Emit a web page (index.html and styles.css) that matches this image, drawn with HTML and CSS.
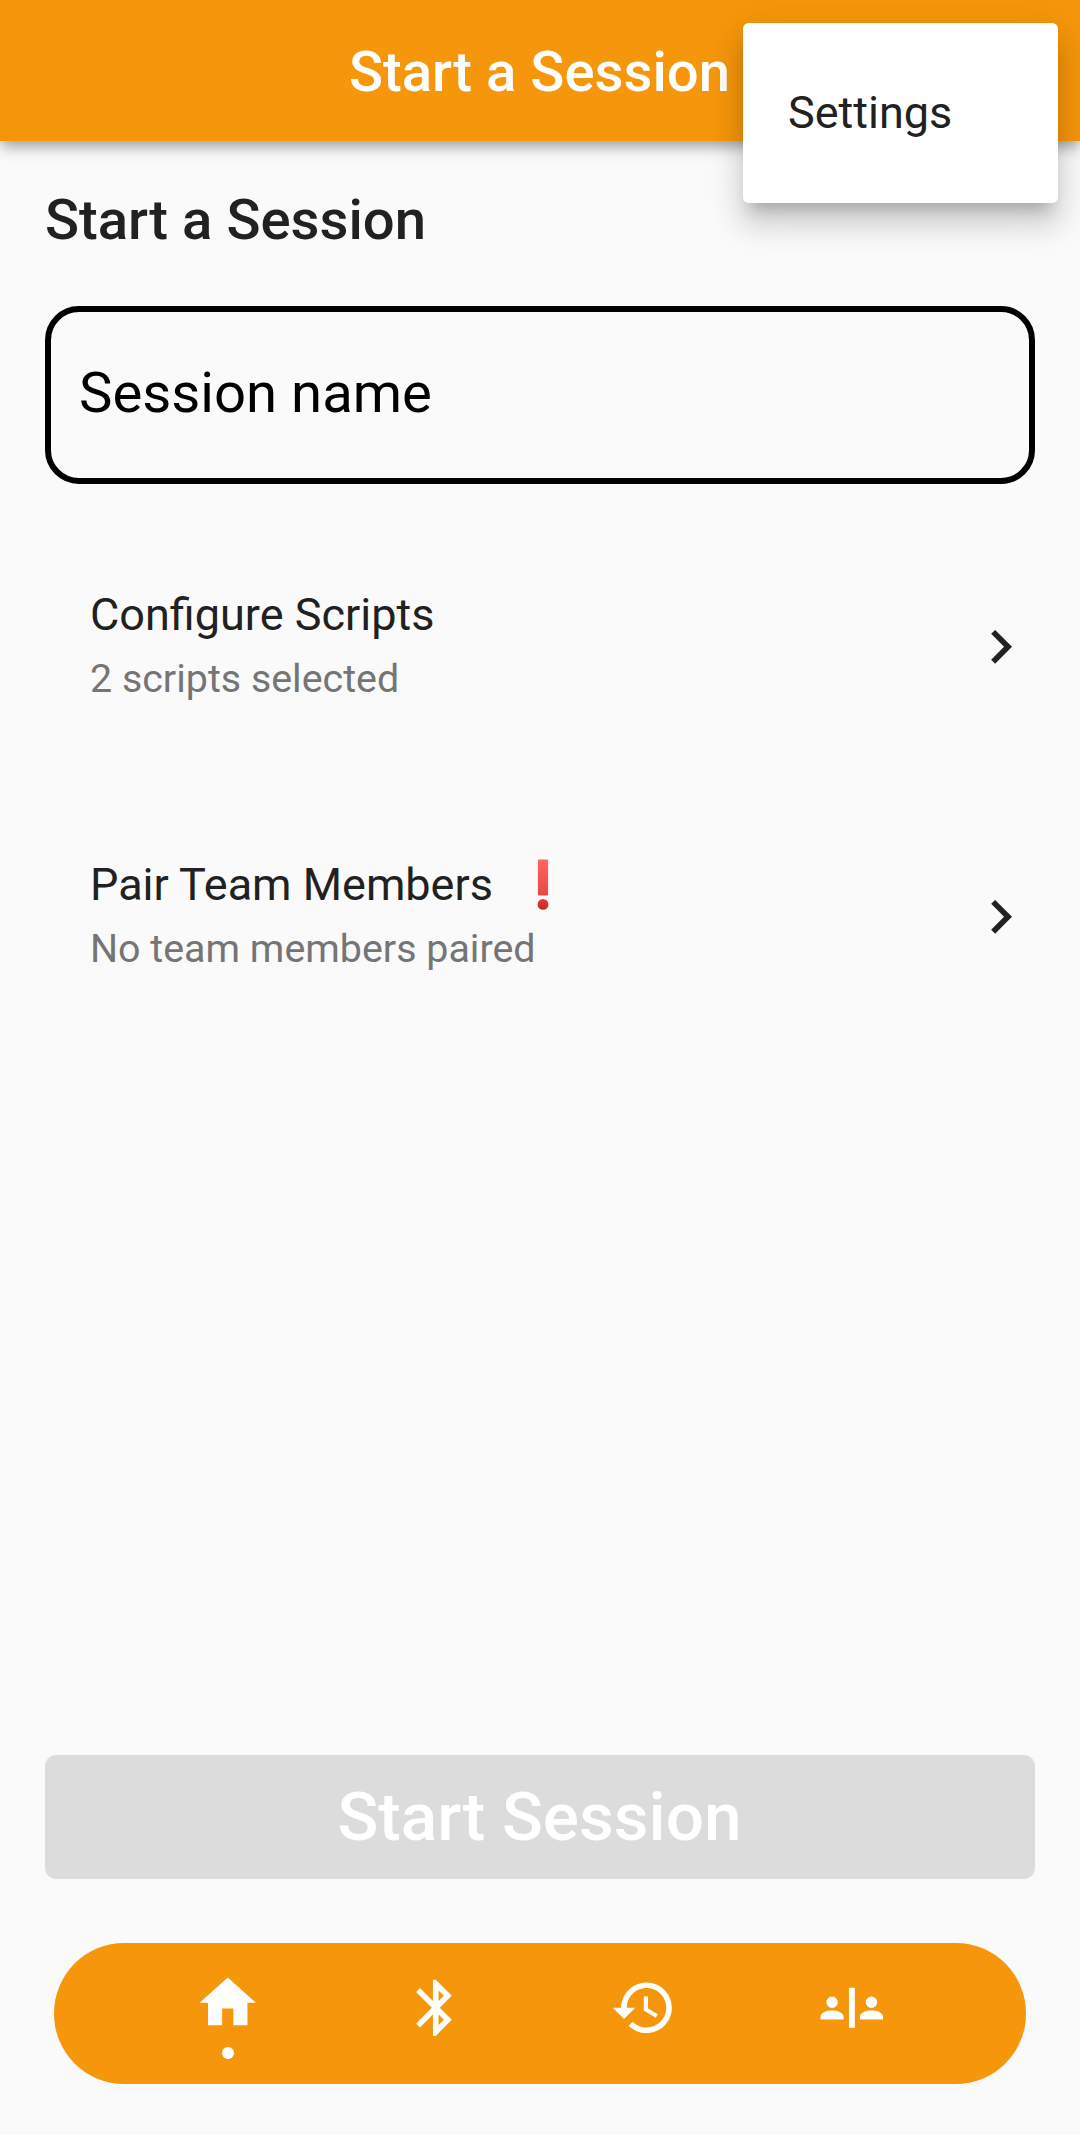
FILE: index.html
```html
<!DOCTYPE html>
<html lang="en">
<head>
<meta charset="utf-8">
<title>Start a Session</title>
<link rel="stylesheet" href="styles.css">
</head>
<body>
<div class="app">
  <header class="app-bar">
    <h1 class="app-title">Start a Session</h1>
  </header>
  <div class="popup-menu">
    <div class="menu-item">Settings</div>
  </div>

  <main class="content">
    <h2 class="heading">Start a Session</h2>
    <div class="field">Session name</div>
    <div class="tile">
      <div class="tile-text">
        <div class="tile-title">Configure Scripts</div>
        <div class="tile-sub">2 scripts selected</div>
      </div>
      <svg class="icon" viewBox="0 0 24 24"><path d="M10 6L8.59 7.41 13.17 12l-4.58 4.59L10 18l6-6z"/></svg>
    </div>
    <div class="tile">
      <div class="tile-text">
        <div class="tile-title">Pair Team Members
          <svg class="alert" viewBox="0 0 12 52">
            <defs>
              <linearGradient id="bar" x1="0" y1="0" x2="0" y2="1"><stop offset="0" stop-color="#ff6464"/><stop offset="1" stop-color="#e94848"/></linearGradient>
              <linearGradient id="dot" x1="0" y1="0" x2="0" y2="1"><stop offset="0" stop-color="#e33b3b"/><stop offset="1" stop-color="#c62828"/></linearGradient>
            </defs>
            <rect x=".9" y=".4" width="10.2" height="36" rx="1.2" fill="url(#bar)"/>
            <circle cx="6" cy="45.4" r="5.4" fill="url(#dot)"/>
          </svg>
        </div>
        <div class="tile-sub">No team members paired</div>
      </div>
      <svg class="icon" viewBox="0 0 24 24"><path d="M10 6L8.59 7.41 13.17 12l-4.58 4.59L10 18l6-6z"/></svg>
    </div>
    <button class="start" disabled>Start Session</button>
  </main>

  <nav class="nav">
    <div class="nav-item active">
      <svg class="icon" viewBox="0 0 24 24"><path d="M10 20v-6h4v6h5v-8h3L12 3 2 12h3v8z"/></svg>
      <span class="nav-dot"></span>
    </div>
    <div class="nav-item">
      <svg class="icon" viewBox="0 0 24 24"><path d="M17.71 7.71L12 2h-1v7.59L6.41 5 5 6.41 10.59 12 5 17.59 6.41 19 11 14.41V22h1l5.71-5.71-4.3-4.29 4.3-4.29zM13 5.83l1.88 1.88L13 9.59V5.83zm1.88 10.46L13 18.17v-3.76l1.88 1.88z"/></svg>
    </div>
    <div class="nav-item">
      <svg class="icon" viewBox="0 0 24 24"><path d="M13 3c-4.97 0-9 4.03-9 9H1l3.89 3.89.07.14L9 12H6c0-3.87 3.13-7 7-7s7 3.13 7 7-3.13 7-7 7c-1.93 0-3.68-.79-4.94-2.06l-1.42 1.42C8.27 19.99 10.51 21 13 21c4.97 0 9-4.03 9-9s-4.03-9-9-9zm-1 5v5l4.28 2.54.72-1.21-3.5-2.08V8H12z"/></svg>
    </div>
    <div class="nav-item">
      <svg class="icon" viewBox="0 0 24 24"><path d="M11 4.9h2.1v14.2H11zM5 8a2.05 2.05 0 1 1 0 4.1A2.05 2.05 0 0 1 5 8zM.9 16.2v-1c0-1.5 2.2-2.2 4.1-2.2s4.1.7 4.1 2.2v1zM19 8a2.05 2.05 0 1 1 0 4.1A2.05 2.05 0 0 1 19 8zM14.9 16.2v-1c0-1.5 2.2-2.2 4.1-2.2s4.1.7 4.1 2.2v1z"/></svg>
    </div>
  </nav>
</div>
</body>
</html>
```
FILE: styles.css
```css
* { box-sizing: border-box; }

body {
  margin: 0;
  font-family: Roboto, "Liberation Sans", sans-serif;
  background: #fafafa;
  color: #212121;
}

.app {
  position: relative;
  display: flex;
  flex-direction: column;
  width: 1080px;
  height: 2135px;
  padding-bottom: 51.4px;
  overflow: hidden;
}

.app-bar {
  display: flex;
  flex: none;
  align-items: center;
  justify-content: center;
  height: 140.6px;
  padding: 4px 1px 0 0;
  background: #f5960b;
  box-shadow: 0 6px 11px -3px rgba(0, 0, 0, .22), 0 9px 13px rgba(0, 0, 0, .14), 0 3px 20px rgba(0, 0, 0, .06);
}

.app-title,
.heading {
  margin: 0;
  font-size: 56.25px;
  font-weight: 500;
  line-height: 66px;
}

.app-title { color: #fff; }

/* overflow menu, open over the app bar */
.popup-menu {
  position: absolute;
  top: 23px;
  left: 743px;
  width: 315px;
  height: 180px;
  padding: 22px 45px;
  border-radius: 5.6px;
  background: #fff;
  box-shadow: 0 14px 14px -8px rgba(0, 0, 0, .2), 0 22px 28px 3px rgba(0, 0, 0, .12), 0 8px 39px 5px rgba(0, 0, 0, .07);
}

.menu-item {
  font-size: 45px;
  line-height: 135px;
}

.content {
  display: flex;
  flex: 1;
  flex-direction: column;
  padding: 46.4px 45px 64px;
}

.field {
  flex: none;
  height: 178px;
  margin: 53px 0 28px;
  padding: 0 28px;
  border: 6px solid #000;
  border-radius: 34px;
  color: #000;
  font-size: 56.25px;
  line-height: 162px;
}

.tile {
  display: flex;
  flex: none;
  align-items: center;
  justify-content: space-between;
  height: 270px;
  padding: 0 .4px 0 45px;
}

.tile-text { padding-top: 2px; }

.tile-title {
  display: flex;
  align-items: center;
  height: 60px;
  font-size: 45px;
  line-height: 60px;
}

.tile-sub {
  height: 66px;
  color: #757575;
  font-size: 39.4px;
  line-height: 67px;
}

.alert {
  width: 12px;
  height: 52px;
  margin-left: 44px;
}

.icon {
  display: block;
  flex: none;
  width: 67.5px;
  height: 67.5px;
  fill: currentColor;
}

.start {
  height: 124px;
  margin: auto 0 0;
  padding: 0 1px 0 0;
  border: 0;
  border-radius: 11.25px;
  background: #dcdcdc;
  color: #fff;
  font: 500 67.5px/124px Roboto, "Liberation Sans", sans-serif;
}

.nav {
  display: grid;
  flex: none;
  grid-template-columns: repeat(4, 208px);
  justify-content: center;
  height: 140.6px;
  margin: 0 54px;
  border-radius: 70.3px;
  background: #f5960b;
  color: #fff;
}

.nav-item {
  display: flex;
  flex-direction: column;
  align-items: center;
  padding-top: 31.4px;
}

.active { padding-top: 25.6px; }

.nav-dot {
  width: 11.6px;
  height: 11.6px;
  margin-top: 11.2px;
  border-radius: 50%;
  background: #fff;
}
```
